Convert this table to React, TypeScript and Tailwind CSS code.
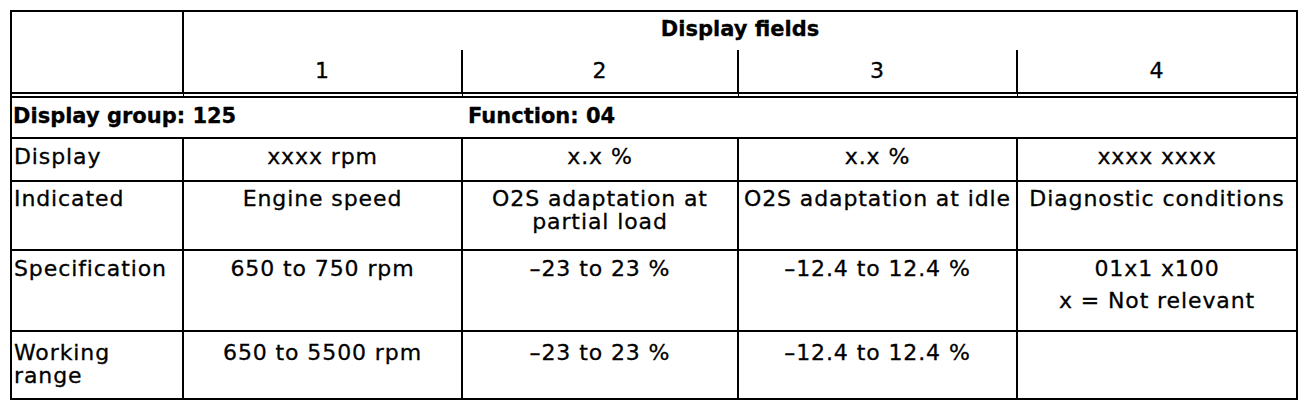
import React from "react";

type Row = {
  label: React.ReactNode;
  cells: React.ReactNode[];
  pad: string;
};

const rows: Row[] = [
  {
    label: "Display",
    cells: ["xxxx rpm", "x.x %", "x.x %", "xxxx xxxx"],
    pad: "pt-[6px]",
  },
  {
    label: "Indicated",
    cells: [
      "Engine speed",
      <>
        O2S adaptation at
        <br />
        partial load
      </>,
      <span className="whitespace-nowrap">O2S adaptation at idle</span>,
      <span className="whitespace-nowrap">Diagnostic conditions</span>,
    ],
    pad: "pt-[5px]",
  },
  {
    label: "Specification",
    cells: [
      "650 to 750 rpm",
      "–23 to 23 %",
      "–12.4 to 12.4 %",
      <>
        <p>01x1 x100</p>
        <p className="mt-[9px]">x = Not relevant</p>
      </>,
    ],
    pad: "pt-[6px]",
  },
  {
    label: (
      <>
        Working
        <br />
        range
      </>
    ),
    cells: ["650 to 5500 rpm", "–23 to 23 %", "–12.4 to 12.4 %", ""],
    pad: "pt-[9px]",
  },
];

const cell = "border-r-2 border-b-2 border-black";

const App: React.FC = () => {
  return (
    <div className="min-h-[410px] bg-white pt-[10px] pl-[10px] font-['DejaVu_Sans',sans-serif] text-black">
      <div className="grid w-fit grid-cols-[172px_279px_276px_279px_280px] grid-rows-[38px_48px_41px_43px_69px_81px_68px] border-l-2 border-t-2 border-black text-[22px] leading-[23px] tracking-[0.9px] [-webkit-text-stroke:0.3px_black]">
        {/* header */}
        <div className="row-span-2 border-r-2 border-b-[6px] border-black [border-bottom-style:double]" />
        <div className="col-span-4 border-r-2 border-black pt-[6px] text-center text-[21px] font-bold tracking-normal">
          Display fields
        </div>
        {["1", "2", "3", "4"].map((n) => (
          <div
            key={n}
            className="border-r-2 border-b-[6px] border-black pt-[9px] text-center [border-bottom-style:double]"
          >
            {n}
          </div>
        ))}

        {/* group row */}
        <div className="col-span-2 border-b-2 border-black pt-[7px] pl-[1px] text-[21px] font-bold tracking-normal">
          Display group: 125
        </div>
        <div className="col-span-3 border-r-2 border-b-2 border-black pt-[7px] pl-[5px] text-[21px] font-bold tracking-normal">
          Function: 04
        </div>

        {rows.map((r, i) => (
          <React.Fragment key={i}>
            <div className={`${cell} ${r.pad} pl-[2px]`}>{r.label}</div>
            {r.cells.map((c, j) => (
              <div key={j} className={`${cell} ${r.pad} text-center`}>
                {c}
              </div>
            ))}
          </React.Fragment>
        ))}
      </div>
    </div>
  );
};

export default App;
